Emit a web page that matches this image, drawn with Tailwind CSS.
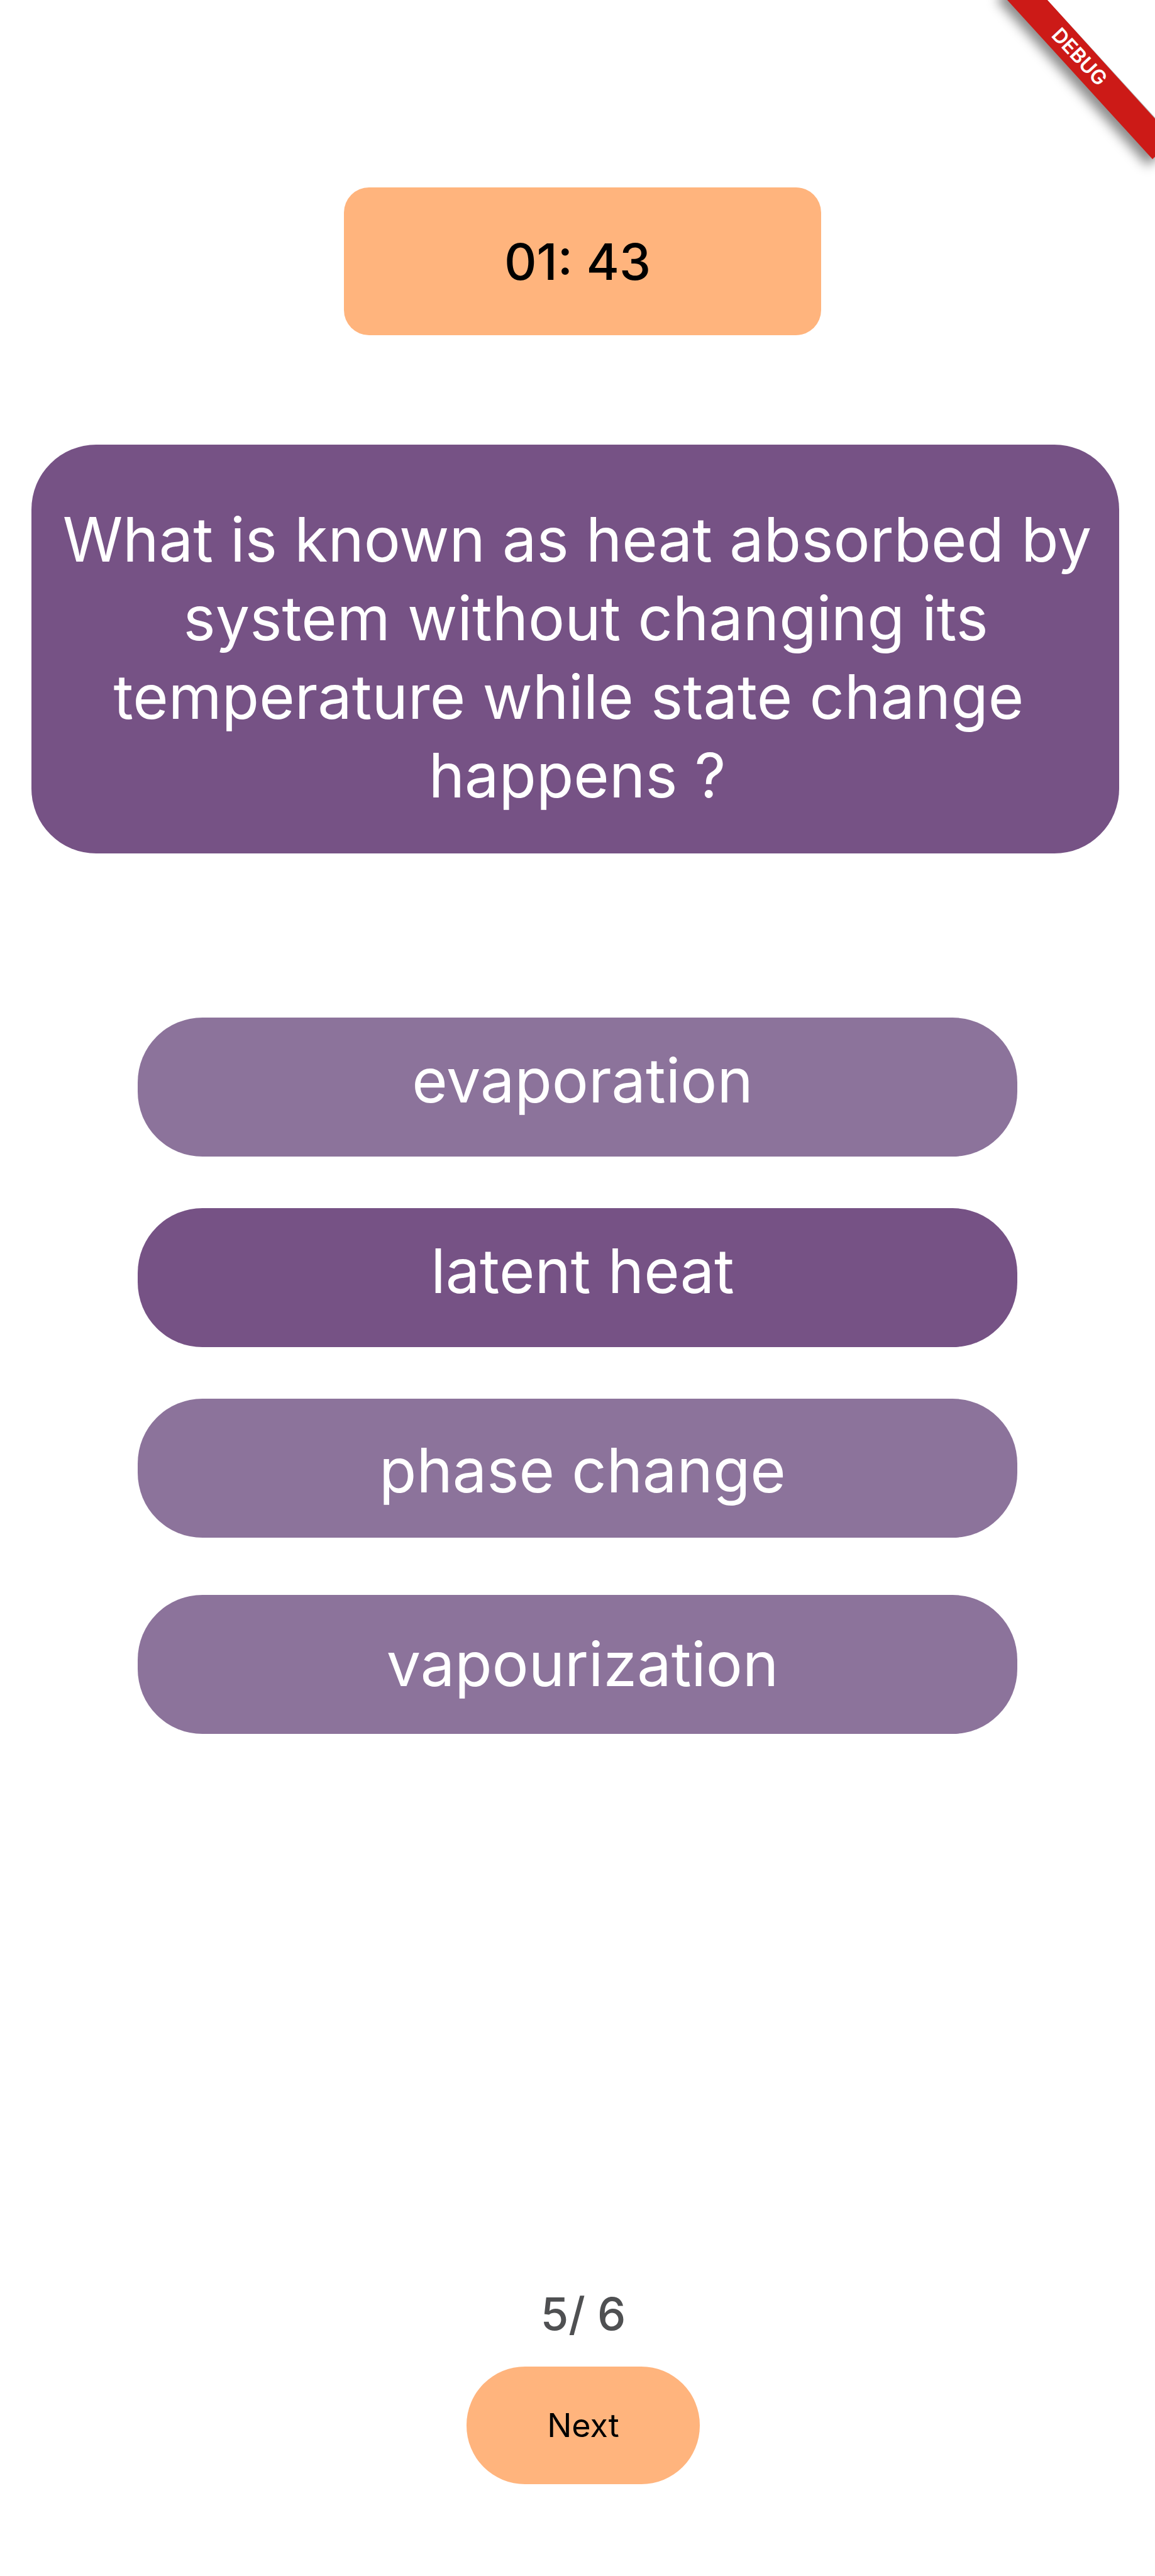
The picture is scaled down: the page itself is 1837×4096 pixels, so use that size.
<!DOCTYPE html>
<html lang="en">
<head>
<meta charset="utf-8">
<meta name="viewport" content="width=device-width, initial-scale=1">
<title>Quiz</title>
<script src="https://cdn.jsdelivr.net/npm/@tailwindcss/browser@4"></script>
</head>
<body class="bg-white font-['Inter',sans-serif]">
<div class="relative flex min-h-screen flex-col items-center overflow-hidden">
  <svg class="absolute top-0 right-0" width="320" height="320" viewBox="-20 0 320 320" role="img" aria-label="Debug build">
    <defs>
      <filter id="banner-shadow" filterUnits="userSpaceOnUse" x="-60" y="-80" width="460" height="460"><feGaussianBlur stdDeviation="9"/></filter>
    </defs>
    <path d="M48 0L288 264L336 220L90 -46Z" fill="#000" fill-opacity=".45" filter="url(#banner-shadow)"/>
    <path d="M39 -28L65 0L296 253L330 222L129 0L83 -50Z" fill="#cc1a17"/>
    <path d="M129 0L300 187V0Z" fill="#fff"/>
    <text x="180" y="90" transform="rotate(47 180 90)" text-anchor="middle" dominant-baseline="central" fill="#fff" font-size="32" font-weight="600">DEBUG</text>
  </svg>

  <header class="mt-[298px] flex h-[235px] w-[759px] translate-x-2 items-center justify-center rounded-[40px] bg-[#ffb47d]">
    <time class="mr-4 text-[80px] leading-[96px] font-medium text-black">01: 43</time>
  </header>

  <main class="flex w-full flex-col">
    <h1 class="mt-[174px] mr-[57px] ml-[50px] h-[650px] rounded-[103px] bg-[#765285] pt-[88px] pl-[6px] text-center text-[97px] leading-[125px] font-normal text-white">What is known as heat absorbed by<br>&nbsp;system without changing its<br>temperature while state change&nbsp;<br>happens ?</h1>

    <div class="mx-[219px] mt-[261px] flex flex-col gap-[82px] text-[97px] leading-[117px] text-white">
      <button type="button" class="flex h-[221px] justify-center rounded-[103px] bg-[#8c739b] pt-[41px] pl-4">evaporation</button>
      <button type="button" class="flex h-[221px] justify-center rounded-[103px] bg-[#765285] pt-[41px] pl-4" aria-pressed="true">latent heat</button>
      <button type="button" class="flex h-[221px] justify-center rounded-[103px] bg-[#8c739b] pt-[55px] pl-4">phase change</button>
      <button type="button" class="mt-[9px] flex h-[221px] justify-center rounded-[103px] bg-[#8c739b] pt-[51px] pl-4">vapourization</button>
    </div>
  </main>

  <footer class="mt-auto mb-[146px] flex flex-col items-center pl-[18px]">
    <p class="text-[72px] leading-[88px] font-medium text-[#4f5052]">5/ 6</p>
    <button type="button" class="mt-10 flex h-[187px] w-[371px] items-center justify-center rounded-[93px] bg-[#ffb47d] text-[52px] leading-[64px] text-black">Next</button>
  </footer>
</div>
</body>
</html>
